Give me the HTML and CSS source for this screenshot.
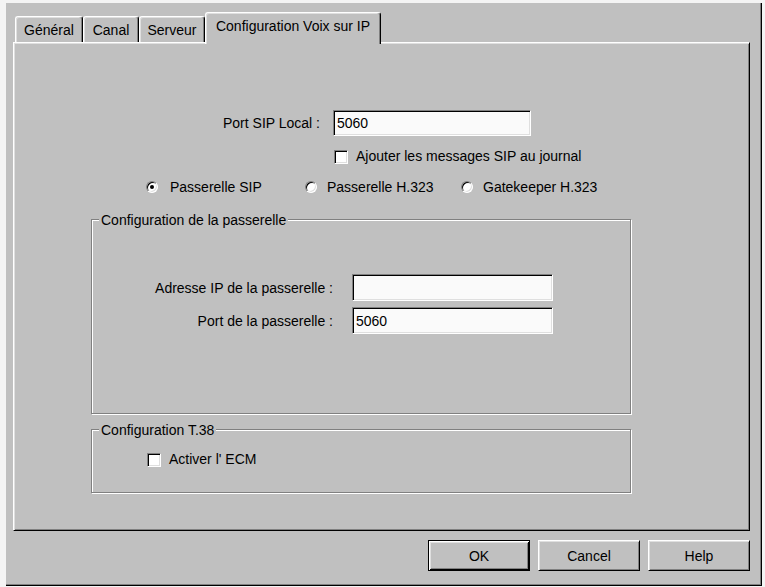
FILE: index.html
```html
<!DOCTYPE html>
<html lang="fr">
<head>
<meta charset="utf-8">
<title>Configuration Voix sur IP</title>
<link rel="stylesheet" href="styles.css">
</head>
<body>
<div class="dialog">
  <div class="tabs">
    <div class="tab t-general">Général</div>
    <div class="tab t-canal">Canal</div>
    <div class="tab t-serveur">Serveur</div>
    <div class="tab t-voip active">Configuration Voix sur IP</div>
  </div>
  <div class="panel">
    <div class="row row-sip">
      <span class="lbl lbl-sip">Port SIP Local :</span>
      <span class="field field-sip">5060</span>
    </div>
    <div class="check-row check-sip">
      <span class="checkbox"></span>
      <span>Ajouter les messages SIP au journal</span>
    </div>
    <div class="radios">
      <div class="radio-item r1"><span class="radio"><span class="dot"></span></span><span>Passerelle SIP</span></div>
      <div class="radio-item r2"><span class="radio"></span><span>Passerelle H.323</span></div>
      <div class="radio-item r3"><span class="radio"></span><span>Gatekeeper H.323</span></div>
    </div>
    <div class="group group-gw">
      <div class="group-title">Configuration de la passerelle</div>
      <div class="row row-ip">
        <span class="lbl lbl-gw">Adresse IP de la passerelle :</span>
        <span class="field field-gw"></span>
      </div>
      <div class="row row-port">
        <span class="lbl lbl-gw">Port de la passerelle :</span>
        <span class="field field-gw">5060</span>
      </div>
    </div>
    <div class="group group-t38">
      <div class="group-title">Configuration T.38</div>
      <div class="check-row check-ecm">
        <span class="checkbox"></span>
        <span>Activer l' ECM</span>
      </div>
    </div>
  </div>
  <div class="buttons">
    <div class="btn default">OK</div>
    <div class="btn">Cancel</div>
    <div class="btn">Help</div>
  </div>
</div>
</body>
</html>
```
FILE: styles.css
```css
* { box-sizing: border-box; }

body {
  margin: 0;
  background: #f4f4f4;
  font-family: "Liberation Sans", Arial, sans-serif;
  font-size: 14px;
  color: #000;
}

.dialog {
  margin: 3px 0 0 6px;
  width: 756px;
  height: 583px;
  background: #c0c0c0;
  border-right: 1px solid #000;
  border-bottom: 1px solid #000;
  box-shadow: inset -1px -1px #808080;
  padding: 9px 0 0 7px;
}

/* Tabs */
.tabs {
  display: flex;
  align-items: flex-end;
  height: 30px;
  padding-left: 2px;
}

.tab {
  height: 26px;
  border: 1px solid #fff;
  border-bottom: none;
  border-right-color: #000;
  border-radius: 3px 3px 0 0;
  box-shadow: inset -1px 0 #808080, inset 1px 1px #dfdfdf;
  display: flex;
  align-items: center;
  justify-content: center;
  line-height: 16px;
  padding-top: 1px;
  background: #c0c0c0;
}

.t-general { width: 68px; }
.t-canal { width: 56px; }
.t-serveur { width: 66px; }
.t-voip { width: 176px; }

.tab.active {
  height: 32px;
  margin-bottom: -2px;
  padding-top: 0;
  padding-bottom: 6px;
  position: relative;
  z-index: 1;
}

/* Panel */
.panel {
  width: 737px;
  height: 489px;
  border: 1px solid;
  border-color: #fff #000 #000 #fff;
  box-shadow: inset 1px 1px #dfdfdf, inset -1px -1px #808080;
  display: flex;
  flex-direction: column;
  align-items: flex-start;
}

.row {
  display: flex;
  align-items: center;
}

.lbl {
  text-align: right;
  line-height: 16px;
}

.field {
  background: #fafafa;
  border: 1px solid;
  border-color: #808080 #fff #fff #808080;
  box-shadow: inset 1px 1px #000, inset -1px -1px #dfdfdf;
  padding-left: 3px;
  display: flex;
  align-items: center;
  line-height: 16px;
}

.row-sip { margin-top: 67px; }
.lbl-sip { width: 306px; margin-right: 13px; }
.field-sip { width: 198px; height: 26px; }

.check-row {
  display: flex;
  align-items: center;
  gap: 8px;
  line-height: 15px;
}

.checkbox {
  width: 14px;
  height: 14px;
  background: #fff;
  border: 1px solid;
  border-color: #808080 #fff #fff #808080;
  box-shadow: inset 1px 1px #000, inset -1px -1px #dfdfdf;
}

.check-sip { margin-top: 13px; margin-left: 320px; }

/* Radios */
.radios {
  display: flex;
  align-items: center;
  height: 14px;
  line-height: 14px;
  margin-top: 16px;
  margin-left: 132px;
}

.radio-item {
  display: flex;
  align-items: center;
  gap: 10px;
}

.r1 { width: 159px; gap: 12px; }
.r2 { width: 156px; }

.radio {
  width: 12px;
  height: 12px;
  border-radius: 50%;
  background: #fff;
  border: 1px solid;
  border-color: #808080 #fff #fff #808080;
  box-shadow: inset 1px 1px #000, inset -1px -1px #dfdfdf;
  display: flex;
  align-items: center;
  justify-content: center;
}

.dot {
  width: 4px;
  height: 4px;
  border-radius: 50%;
  background: #000;
}

/* Group boxes */
.group {
  border: 1px solid #808080;
  box-shadow: inset 1px 1px #fff, 1px 1px #fff;
  width: 540px;
  margin-left: 77px;
}

.group-title {
  width: fit-content;
  margin: -8px 0 0 7px;
  padding: 0 2px;
  background: #c0c0c0;
  line-height: 16px;
}

.group-gw { margin-top: 25px; height: 195px; }
.group-t38 { margin-top: 15px; height: 64px; }

.row-ip { margin-top: 46px; }
.row-port { margin-top: 6px; }
.lbl-gw { width: 241px; margin-right: 19px; }
.field-gw { width: 201px; height: 27px; }

.check-ecm { margin-top: 14px; margin-left: 55px; }

/* Buttons */
.buttons {
  display: flex;
  justify-content: flex-end;
  gap: 8px;
  width: 737px;
  margin-top: 9px;
}

.btn {
  width: 102px;
  height: 31px;
  display: flex;
  align-items: center;
  justify-content: center;
  border: 1px solid;
  border-color: #fff #000 #000 #fff;
  box-shadow: inset 1px 1px #dfdfdf, inset -1px -1px #808080;
}

.btn.default {
  border-color: #000;
  box-shadow: inset 1px 1px #fff, inset -1px -1px #000, inset 2px 2px #dfdfdf, inset -2px -2px #808080;
}
```
